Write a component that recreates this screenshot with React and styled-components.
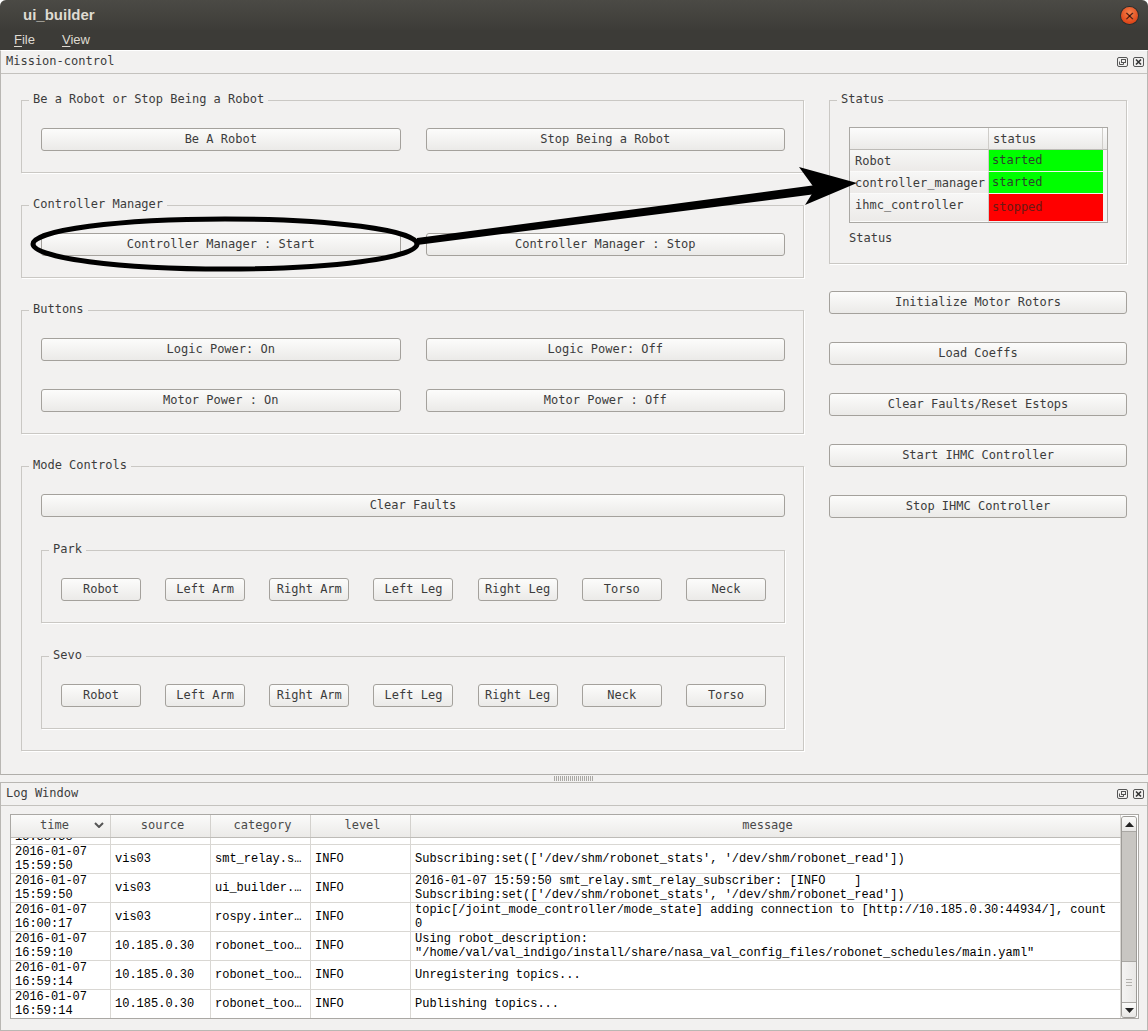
import React from "react";
import styled, { createGlobalStyle } from "styled-components";

// Data
const logRows = [
  {
    time: ["2016-01-07", "15:58:58"],
    source: "vis03",
    category: "smt_relay.s…",
    level: "INFO",
    message: ["Subscribing:set(['/dev/shm/robonet_stats', '/dev/shm/robonet_read'])"],
  },
  {
    time: ["2016-01-07", "15:59:50"],
    source: "vis03",
    category: "smt_relay.s…",
    level: "INFO",
    message: ["Subscribing:set(['/dev/shm/robonet_stats', '/dev/shm/robonet_read'])"],
  },
  {
    time: ["2016-01-07", "15:59:50"],
    source: "vis03",
    category: "ui_builder.…",
    level: "INFO",
    message: [
      "2016-01-07 15:59:50 smt_relay.smt_relay_subscriber: [INFO    ]",
      "Subscribing:set(['/dev/shm/robonet_stats', '/dev/shm/robonet_read'])",
    ],
  },
  {
    time: ["2016-01-07", "16:00:17"],
    source: "vis03",
    category: "rospy.inter…",
    level: "INFO",
    message: [
      "topic[/joint_mode_controller/mode_state] adding connection to [http://10.185.0.30:44934/], count",
      "0",
    ],
  },
  {
    time: ["2016-01-07", "16:59:10"],
    source: "10.185.0.30",
    category: "robonet_too…",
    level: "INFO",
    message: [
      "Using robot_description:",
      '"/home/val/val_indigo/install/share/nasa_val_config_files/robonet_schedules/main.yaml"',
    ],
  },
  {
    time: ["2016-01-07", "16:59:14"],
    source: "10.185.0.30",
    category: "robonet_too…",
    level: "INFO",
    message: ["Unregistering topics..."],
  },
  {
    time: ["2016-01-07", "16:59:14"],
    source: "10.185.0.30",
    category: "robonet_too…",
    level: "INFO",
    message: ["Publishing topics..."],
  },
];

const parkJoints = ["Robot", "Left Arm", "Right Arm", "Left Leg", "Right Leg", "Torso", "Neck"];
const sevoJoints = ["Robot", "Left Arm", "Right Arm", "Left Leg", "Right Leg", "Neck", "Torso"];

const statusRows = [
  { name: "Robot", state: "started", color: "#00ff00", text: "#2d3f2d", height: 22 },
  { name: "controller_manager", state: "started", color: "#00ff00", text: "#2d3f2d", height: 22 },
  { name: "ihmc_controller", state: "stopped", color: "#ff0000", text: "#6a1a14", height: 28 },
];

const rightActions = [
  "Initialize Motor Rotors",
  "Load Coeffs",
  "Clear Faults/Reset Estops",
  "Start IHMC Controller",
  "Stop IHMC Controller",
];

// Small drawings
const FloatIcon = () => (
  <svg width="11" height="10" viewBox="0 0 11 10">
    <rect x="0.5" y="0.5" width="10" height="9" rx="1.5" fill="none" stroke="#555" />
    <rect x="4.5" y="2.5" width="4" height="3" fill="none" stroke="#555" />
    <path d="M2.5 4.5 V7.5 H6.5 V5.5" fill="none" stroke="#555" />
  </svg>
);

const CloseIcon = () => (
  <svg width="11" height="10" viewBox="0 0 11 10">
    <rect x="0.5" y="0.5" width="10" height="9" rx="1.5" fill="none" stroke="#555" />
    <path d="M3 2.5 L8 7.5 M8 2.5 L3 7.5" stroke="#333" strokeWidth="1.6" />
  </svg>
);

const SortChevron = () => (
  <svg width="10" height="6" viewBox="0 0 10 6">
    <path d="M1 1 L5 5 L9 1" fill="none" stroke="#555" strokeWidth="2" />
  </svg>
);

const Arrow = ({ down }) => (
  <svg width="9" height="5" viewBox="0 0 9 5">
    <path d={down ? "M0 0 H9 L4.5 5 Z" : "M0 5 H9 L4.5 0 Z"} fill="#222" />
  </svg>
);

const DockTitle = ({ children }) => (
  <DockHeader>
    <span>{children}</span>
    <DockButtons>
      <FloatIcon />
      <CloseIcon />
    </DockButtons>
  </DockHeader>
);

const Group = ({ title, children, $column, $gap }) => (
  <GroupBox>
    <GroupTitle>{title}</GroupTitle>
    <GroupBody $column={$column} $gap={$gap}>
      {children}
    </GroupBody>
  </GroupBox>
);

const App = () => {
  return (
    <Window>
      <GlobalStyle />
      <TitleBar>
        <span>ui_builder</span>
        <WindowClose>×</WindowClose>
      </TitleBar>
      <MenuBar>
        <MenuItem>
          <u>F</u>ile
        </MenuItem>
        <MenuItem>
          <u>V</u>iew
        </MenuItem>
      </MenuBar>

      <MissionDock>
        <DockTitle>Mission-control</DockTitle>
        <MissionBody>
          <LeftColumn>
            <Group title="Be a Robot or Stop Being a Robot">
              <Button>Be A Robot</Button>
              <Button>Stop Being a Robot</Button>
            </Group>
            <Group title="Controller Manager">
              <Button>Controller Manager : Start</Button>
              <Button>Controller Manager : Stop</Button>
            </Group>
            <Group title="Buttons" $column $gap={28}>
              <ButtonRow>
                <Button>Logic Power: On</Button>
                <Button>Logic Power: Off</Button>
              </ButtonRow>
              <ButtonRow>
                <Button>Motor Power : On</Button>
                <Button>Motor Power : Off</Button>
              </ButtonRow>
            </Group>
            <Group title="Mode Controls" $column $gap={33}>
              <Button>Clear Faults</Button>
              <Group title="Park">
                <JointRow>
                  {parkJoints.map((j) => (
                    <JointButton key={j}>{j}</JointButton>
                  ))}
                </JointRow>
              </Group>
              <Group title="Sevo">
                <JointRow>
                  {sevoJoints.map((j) => (
                    <JointButton key={j}>{j}</JointButton>
                  ))}
                </JointRow>
              </Group>
            </Group>
          </LeftColumn>

          <RightColumn>
            <GroupBox>
              <GroupTitle>Status</GroupTitle>
              <StatusBody>
                <StatusTable>
                  <HeadCell />
                  <HeadCell>status</HeadCell>
                  <HeadCell $last />
                  {statusRows.map((r) => (
                    <React.Fragment key={r.name}>
                      <RowHead $h={r.height}>{r.name}</RowHead>
                      <StateCell $h={r.height} $bg={r.color} $fg={r.text}>
                        {r.state}
                      </StateCell>
                      <Filler $h={r.height} />
                    </React.Fragment>
                  ))}
                </StatusTable>
                <StatusLabel>Status</StatusLabel>
              </StatusBody>
            </GroupBox>
            <ActionList>
              {rightActions.map((a) => (
                <Button key={a}>{a}</Button>
              ))}
            </ActionList>
          </RightColumn>
        </MissionBody>
      </MissionDock>

      <Splitter>
        <Grip />
      </Splitter>

      <LogDock>
        <DockTitle>Log Window</DockTitle>
        <LogBody>
          <LogTable>
            <LogMain>
              <LogHeader>
                <LogHeadCell>
                  <HeadLabel>time</HeadLabel>
                  <SortChevron />
                </LogHeadCell>
                <LogHeadCell>source</LogHeadCell>
                <LogHeadCell>category</LogHeadCell>
                <LogHeadCell>level</LogHeadCell>
                <LogHeadCell>message</LogHeadCell>
              </LogHeader>
              <LogRows>
                {logRows.map((row, i) => (
                  <LogRow key={i}>
                    <LogCell>
                      {row.time.map((t) => (
                        <Line key={t}>{t}</Line>
                      ))}
                    </LogCell>
                    <LogCell>{row.source}</LogCell>
                    <LogCell>{row.category}</LogCell>
                    <LogCell>{row.level}</LogCell>
                    <LogCell>
                      {row.message.map((m, k) => (
                        <Line key={k}>{m}</Line>
                      ))}
                    </LogCell>
                  </LogRow>
                ))}
              </LogRows>
            </LogMain>
            <ScrollBar>
              <ScrollButton>
                <Arrow />
              </ScrollButton>
              <ScrollTrack>
                <ScrollThumb />
              </ScrollTrack>
              <ScrollButton $bottom>
                <Arrow down />
              </ScrollButton>
            </ScrollBar>
          </LogTable>
        </LogBody>
      </LogDock>

      <Annotation width="1148" height="1031" viewBox="0 0 1148 1031">
        <ellipse cx="225" cy="244" rx="192" ry="25" fill="none" stroke="#000" strokeWidth="5" />
        <polygon points="417,238 816,185 816,194 417,245" fill="#000" />
        <polygon points="857,183 799,167 815,189 805,205" fill="#000" />
      </Annotation>
    </Window>
  );
};

// Styled components
const GlobalStyle = createGlobalStyle`
  html, body {
    margin: 0;
    padding: 0;
    background: #ffffff;
  }
  * {
    box-sizing: border-box;
  }
`;

const Window = styled.div`
  position: relative;
  width: 1148px;
  height: 1031px;
  display: flex;
  flex-direction: column;
  overflow: hidden;
  background: #f2f1f0;
  border-radius: 6px 6px 0 0;
  font-family: "DejaVu Sans Mono", monospace;
  font-size: 12px;
  color: #3c3c3c;
`;

const TitleBar = styled.div`
  height: 30px;
  flex-shrink: 0;
  display: flex;
  align-items: center;
  justify-content: space-between;
  padding: 0 10px 2px 23px;
  background: linear-gradient(#4b4a45, #3d3c38);
  color: #dfdbd2;
  font-family: "Liberation Sans", Arial, sans-serif;
  font-weight: bold;
  font-size: 15px;
`;

const WindowClose = styled.div`
  width: 17px;
  height: 17px;
  margin-top: 2px;
  border-radius: 50%;
  background: radial-gradient(circle at 50% 35%, #f6844f, #e0481a 70%);
  box-shadow: 0 0 0 1px #2e2d2a;
  display: flex;
  align-items: center;
  justify-content: center;
  color: #3a1208;
  font-family: "DejaVu Sans", sans-serif;
  font-weight: normal;
  font-size: 13px;
  line-height: 1;
`;

const MenuBar = styled.div`
  height: 20px;
  flex-shrink: 0;
  display: flex;
  align-items: center;
  gap: 27px;
  padding: 0 0 2px 14px;
  background: #3c3b37;
  color: #dfdbd2;
  font-family: "Liberation Sans", Arial, sans-serif;
  font-size: 13px;
`;

const MenuItem = styled.span`
  u {
    text-underline-offset: 2px;
  }
`;

const MissionDock = styled.div`
  height: 725px;
  flex-shrink: 0;
  display: flex;
  flex-direction: column;
  border-top: 1px solid #ffffff;
  border-left: 1px solid #b9b7b3;
  border-right: 1px solid #b9b7b3;
  border-bottom: 1px solid #b0aeaa;
`;

const DockHeader = styled.div`
  height: 23px;
  flex-shrink: 0;
  display: flex;
  align-items: center;
  justify-content: space-between;
  padding: 0 3px 3px 5px;
  border-bottom: 1px solid #c4c2be;
  color: #3c3c3c;
`;

const DockButtons = styled.div`
  display: flex;
  gap: 5px;
  margin-top: 2px;
`;

const MissionBody = styled.div`
  flex: 1;
  display: flex;
  gap: 25px;
  padding: 26px 0 0 20px;
`;

const LeftColumn = styled.div`
  width: 783px;
  display: flex;
  flex-direction: column;
  gap: 32px;
`;

const RightColumn = styled.div`
  width: 298px;
  display: flex;
  flex-direction: column;
`;

const GroupBox = styled.div`
  display: flex;
  flex-direction: column;
  border: 1px solid #cac8c4;
  box-shadow: 1px 1px 0 #ffffff;
`;

const GroupTitle = styled.div`
  align-self: flex-start;
  height: 14px;
  line-height: 13px;
  margin: -8px 0 -6px 7px;
  padding: 0 4px;
  background: #f2f1f0;
  color: #3c3c3c;
  white-space: nowrap;
`;

const GroupBody = styled.div`
  display: flex;
  flex-direction: ${(p) => (p.$column ? "column" : "row")};
  gap: ${(p) => (p.$gap ? `${p.$gap}px` : "25px")};
  padding: 27px 18px 21px 19px;
  & > button {
    flex: ${(p) => (p.$column ? "none" : "1")};
  }
`;

const ButtonRow = styled.div`
  display: flex;
  gap: 25px;
  & > button {
    flex: 1;
  }
`;

const Button = styled.button`
  height: 23px;
  padding: 0 6px 2px;
  border: 1px solid #a4a19c;
  border-radius: 3px;
  background: linear-gradient(#fcfcfb, #ebeae8);
  color: #3c3c3c;
  font-family: "DejaVu Sans Mono", monospace;
  font-size: 12px;
  white-space: nowrap;
  cursor: pointer;
`;

const JointRow = styled.div`
  flex: 1;
  display: flex;
  justify-content: space-between;
`;

const JointButton = styled(Button)`
  width: 80px;
  padding: 0 0 2px;
`;

const StatusBody = styled.div`
  display: flex;
  flex-direction: column;
  padding: 26px 18px 18px 19px;
`;

const StatusTable = styled.div`
  display: grid;
  grid-template-columns: 139px 114px 1fr;
  border: 1px solid #aaa8a4;
  background: #f4f3f2;
`;

const HeadCell = styled.div`
  height: 22px;
  line-height: 22px;
  padding-left: 4px;
  background: linear-gradient(#fcfcfc, #ebeae8);
  border-right: ${(p) => (p.$last ? "none" : "1px solid #cfcdc9")};
  border-bottom: 1px solid #bdbbb7;
  color: #3c3c3c;
`;

const RowHead = styled.div`
  height: ${(p) => p.$h}px;
  line-height: 22px;
  padding-left: 5px;
  background: linear-gradient(#f7f7f6, #eceae8);
  border-right: 1px solid #cfcdc9;
  border-bottom: 1px solid #fbfbfa;
  color: #3c3c3c;
  white-space: nowrap;
`;

const StateCell = styled.div`
  height: ${(p) => p.$h}px;
  display: flex;
  align-items: center;
  padding: 0 0 1px 3px;
  background: ${(p) => p.$bg};
  border-bottom: 1px solid #f2f1f0;
  color: ${(p) => p.$fg};
`;

const Filler = styled.div`
  height: ${(p) => p.$h}px;
  background: #f4f3f2;
`;

const StatusLabel = styled.div`
  margin-top: 8px;
  line-height: 14px;
  color: #3c3c3c;
`;

const ActionList = styled.div`
  display: flex;
  flex-direction: column;
  gap: 28px;
  margin-top: 27px;
`;

const Splitter = styled.div`
  height: 7px;
  flex-shrink: 0;
  display: flex;
  align-items: center;
  justify-content: center;
`;

const Grip = styled.div`
  width: 40px;
  height: 5px;
  background: repeating-linear-gradient(90deg, #a9a7a3 0 1px, transparent 1px 2px);
`;

const LogDock = styled.div`
  flex: 1;
  min-height: 0;
  display: flex;
  flex-direction: column;
  border: 1px solid #b9b7b3;
`;

const LogBody = styled.div`
  flex: 1;
  min-height: 0;
  display: flex;
  padding: 8px 8px 11px 9px;
`;

const LogTable = styled.div`
  flex: 1;
  min-height: 0;
  display: flex;
  border: 1px solid #aaa8a4;
  background: #ffffff;
  overflow: hidden;
`;

const LogMain = styled.div`
  flex: 1;
  min-height: 0;
  display: flex;
  flex-direction: column;
  min-width: 0;
`;

const LogHeader = styled.div`
  height: 23px;
  flex-shrink: 0;
  display: grid;
  grid-template-columns: 100px 100px 100px 100px 1fr;
  background: linear-gradient(#fbfbfa, #ebeae8);
  border-bottom: 1px solid #bdbbb7;
`;

const LogHeadCell = styled.div`
  display: flex;
  align-items: center;
  justify-content: center;
  padding: 0 0 2px 4px;
  border-right: 1px solid #d3d1cd;
  color: #4a4a4a;
  svg {
    margin: 0 6px 0 0;
  }
`;

const HeadLabel = styled.span`
  flex: 1;
  text-align: center;
`;

const LogRows = styled.div`
  flex: 1;
  min-height: 0;
  display: flex;
  flex-direction: column;
  justify-content: flex-end;
  overflow: hidden;
`;

const LogRow = styled.div`
  height: 29px;
  flex-shrink: 0;
  display: grid;
  grid-template-columns: 100px 100px 100px 100px 1fr;
  border-bottom: 1px solid #d9d7d3;
  &:last-child {
    border-bottom: none;
    height: 28px;
  }
`;

const LogCell = styled.div`
  display: flex;
  flex-direction: column;
  justify-content: center;
  padding: 0 4px;
  border-right: 1px solid #d9d7d3;
  overflow: hidden;
  font-family: "Liberation Mono", "Courier New", monospace;
  font-size: 12px;
  line-height: 14px;
  color: #000000;
  white-space: pre;
`;

const Line = styled.div`
  white-space: pre;
`;

const ScrollBar = styled.div`
  width: 16px;
  flex-shrink: 0;
  margin: 1px 1px 0 0;
  display: flex;
  flex-direction: column;
  border: 1px solid #9d9b97;
  border-radius: 3px;
  background: #c8c6c2;
  overflow: hidden;
`;

const ScrollButton = styled.div`
  height: 15px;
  flex-shrink: 0;
  display: flex;
  align-items: center;
  justify-content: center;
  background: linear-gradient(#fbfbfa, #e8e7e5);
  border-bottom: ${(p) => (p.$bottom ? "none" : "1px solid #a9a7a3")};
  border-top: ${(p) => (p.$bottom ? "1px solid #a9a7a3" : "none")};
`;

const ScrollTrack = styled.div`
  flex: 1;
  display: flex;
  flex-direction: column;
  justify-content: flex-end;
`;

const ScrollThumb = styled.div`
  height: 41px;
  border-top: 1px solid #a9a7a3;
  background: linear-gradient(90deg, #f4f3f2, #e9e8e6);
  position: relative;
  &::after {
    content: "";
    position: absolute;
    left: 4px;
    right: 4px;
    top: 17px;
    height: 7px;
    background: repeating-linear-gradient(#b4b2ae 0 1px, transparent 1px 3px);
  }
`;

const Annotation = styled.svg`
  position: absolute;
  top: 0;
  left: 0;
  pointer-events: none;
`;

export default App;
